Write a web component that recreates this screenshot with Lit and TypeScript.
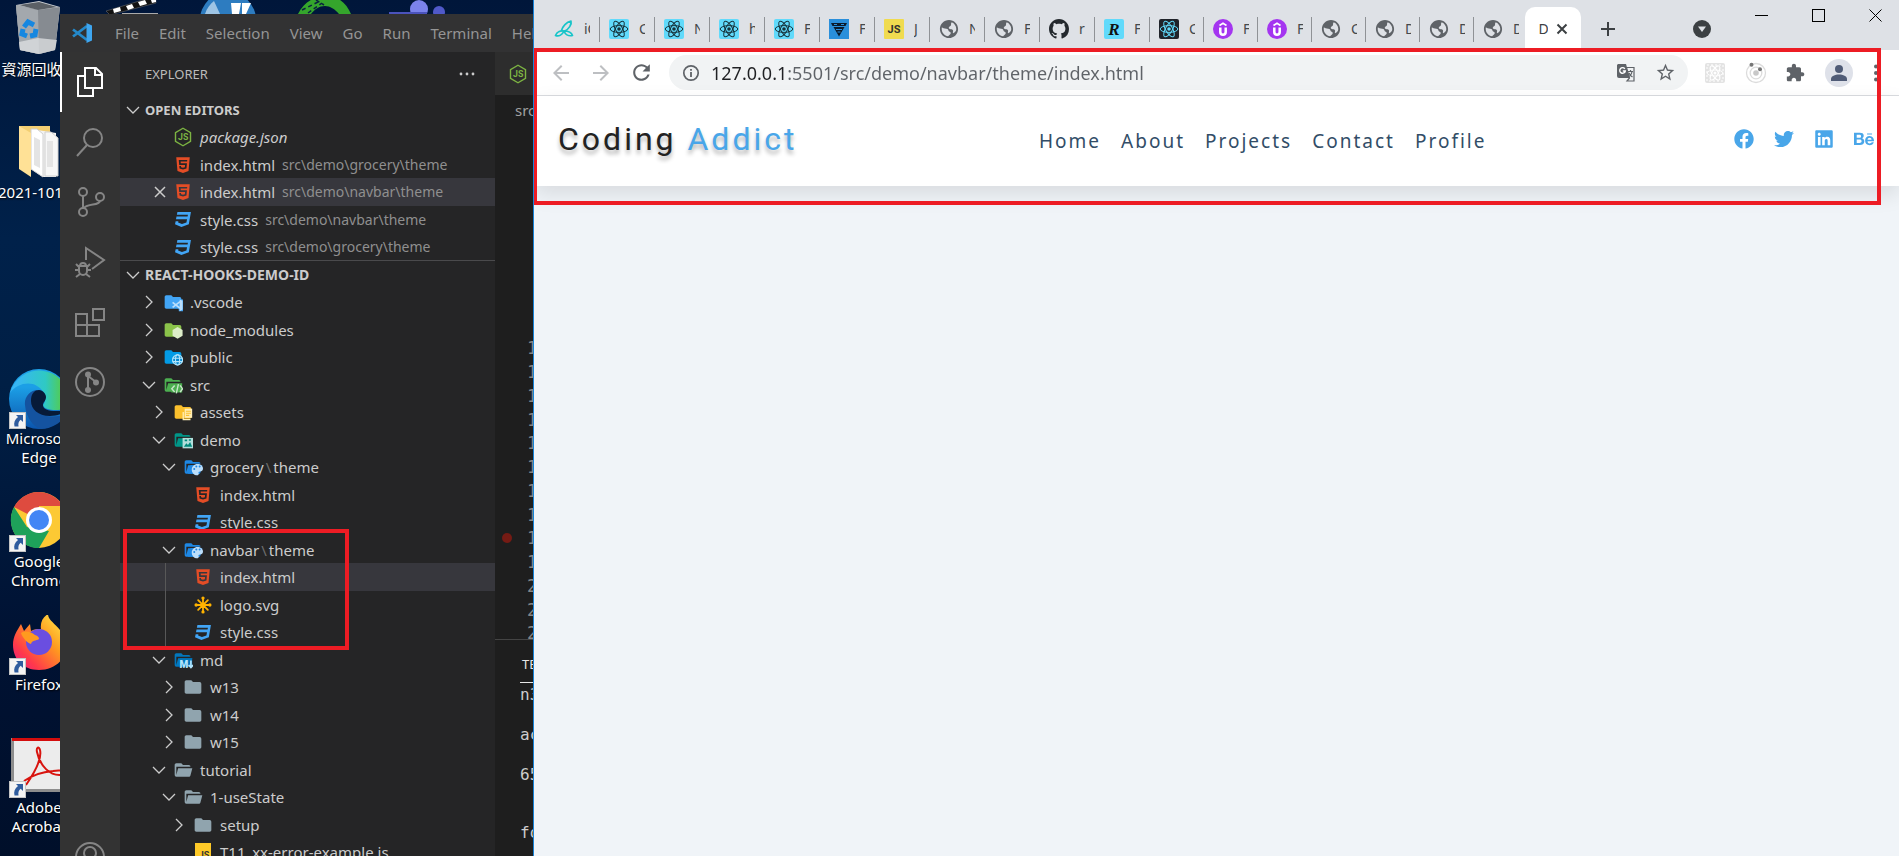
import { LitElement, html, svg, css, nothing } from "lit";
import { customElement } from "lit/decorators.js";

/* ---------- icon helpers ---------- */

const box = (size: number, view: string, body: unknown) =>
  html`<svg class="ic" width=${size} height=${size} viewBox=${view} aria-hidden="true">${body}</svg>`;

const FOLDER = "M10 4H4c-1.11 0-2 .89-2 2v12c0 1.1.9 2 2 2h16c1.1 0 2-.9 2-2V8a2 2 0 0 0-2-2h-8l-2-2z";
const FOLDER_OPEN =
  "M19 20H4a2 2 0 0 1-2-2V6c0-1.11.89-2 2-2h6l2 2h7a2 2 0 0 1 2 2H4v10l2.14-8h17.07l-2.28 8.5c-.23.87-1.01 1.5-1.93 1.5z";

const palette = svg`<path fill="#bbdefb" fill-rule="evenodd" d="M17.5 8.5c-4 0-7 3-7 6.8 0 3.700 3 6.700 6.500 6.700 1.200 0 2-.8 2-1.800 0-1-.8-1.400-.3-2.200.3-.5 1-.7 1.800-.7 2 0 3.500-1.400 3.500-3.300 0-3.200-2.900-5.500-6.500-5.500zM13.500 15.500a1.200 1.200 0 1 1 0-2.400 1.200 1.200 0 0 1 0 2.400zm2.500-3a1.200 1.200 0 1 1 0-2.400 1.200 1.200 0 0 1 0 2.400zm4 0a1.200 1.200 0 1 1 0-2.400 1.200 1.200 0 0 1 0 2.400z"/>`;

const hexJs = svg`<path d="M12 1.500 21 6.700v10.600l-9 5.200-9-5.200V6.700z" fill="none" stroke="#7cb342" stroke-width="1.700"/>
  <text x="12.200" y="16" font-size="10.500" font-weight="700" font-family="Roboto, sans-serif" text-anchor="middle" fill="#7cb342">JS</text>`;

function fileIcon(kind: string) {
  switch (kind) {
    case "node":
      return box(20, "0 0 24 24", hexJs);
    case "html":
      return box(18, "-64 0 512 512", svg`<path fill="#e44d26" d="M0 32l34.900 395.800L191.500 480l157.600-52.200L384 32H0zm308.200 127.900H124.400l4.100 49.400h175.600l-13.600 148.400-97.900 27v.3h-1.100l-98.700-27.300-6-75.800h47.700L138 320l53.500 14.500 53.700-14.500 6-62.200H84.300L71.500 112.200h241.100l-4.400 47.700z"/>`);
    case "css":
      return box(17, "0 0 512 512", svg`<path fill="#42a5f5" d="M480 32l-64 368-223.300 80L0 400l19.600-94.800h82l-8 40.600L210 390.200l134.100-44.400 18.800-97.100H29.500l16-82h333.700l10.500-52.700H56.300l16.300-82H480z"/>`);
    case "svg":
      return box(18, "0 0 24 24", svg`<g stroke="#ffb300" stroke-width="2.400" stroke-linecap="round" fill="#ffb300">
        <path d="M12 2.500v19M2.500 12h19M5.500 5.500l13 13M18.500 5.500l-13 13"/><circle cx="12" cy="2.800" r="1"/><circle cx="12" cy="21.200" r="1"/><circle cx="2.800" cy="12" r="1"/><circle cx="21.200" cy="12" r="1"/></g>`);
    case "js":
      return box(18, "0 0 18 18", svg`<rect x="1" width="16" height="18" fill="#ffca28"/><text x="10" y="15" font-size="9" font-weight="700" font-family="Roboto, sans-serif" text-anchor="middle" fill="#333">JS</text>`);
    case "f-vscode":
      return box(20, "0 0 24 24", svg`<path fill="#42a5f5" d=${FOLDER}/><path fill="#42a5f5" d="M18 8l6 1v14h-5z"/><path fill="none" stroke="#bbdefb" stroke-width="2" d="M11.500 12.500l9 7M11.500 18.500l9-7"/><path fill="#bbdefb" d="M20 9l3.500 1.500v10.500L20 23z"/>`);
    case "f-node":
      return box(20, "0 0 24 24", svg`<path fill="#8bc34a" d=${FOLDER}/><path fill="#dcedc8" d="M17.500 8.500l6 3.400v7.100l-6 3.600-6-3.600v-7.100z"/>`);
    case "f-public":
      return box(20, "0 0 24 24", svg`<path fill="#039be5" d=${FOLDER}/><g fill="#0288d1" stroke="#b3e5fc" stroke-width="1.400"><circle cx="17.500" cy="15.500" r="6"/><ellipse cx="17.500" cy="15.500" rx="2.500" ry="6"/><path d="M11.500 13.500h12M11.500 17.500h12"/></g>`);
    case "f-src":
      return box(20, "0 0 24 24", svg`<path fill="#4caf50" d=${FOLDER_OPEN}/><path fill="#4caf50" d="M10 11h13v10H10z"/><path fill="none" stroke="#c8e6c9" stroke-width="1.700" d="M14 12.500l-3.500 4 3.500 4M20.500 12.500l3 4-3 4M18.500 11l-2.500 11"/>`);
    case "f-assets":
      return box(20, "0 0 24 24", svg`<path fill="#fbc02d" d=${FOLDER}/><path fill="#ffecb3" d="M14 8h9v11h-9z"/><path fill="#fff0b8" d="M11.500 12H13v8.500h8V22h-9.500z"/><path stroke="#fbc02d" stroke-width="1.300" d="M15.500 11h6M15.500 13.500h6M15.500 16h4"/>`);
    case "f-demo":
      return box(20, "0 0 24 24", svg`<path fill="#009688" d=${FOLDER_OPEN}/><path fill="#b2dfdb" d="M11.500 9.500H24V22H11.500z"/><path fill="#00897b" d="M13 20l3-4 2 2 2.500-3.500L23 20zM14 11.500h3v2h-3zM19 11h2.500v2H19z"/>`);
    case "f-theme":
      return box(20, "0 0 24 24", svg`<path fill="#1e88e5" d=${FOLDER_OPEN}/><path fill="#1e88e5" d="M9 9.500h11V20H6z"/>${palette}`);
    case "f-md":
      return box(20, "0 0 24 24", svg`<path fill="#0277bd" d=${FOLDER_OPEN}/><path fill="#0277bd" d="M8 10h15v10H8z"/><text x="13" y="22" font-size="12" font-weight="900" font-family="Roboto, sans-serif" text-anchor="middle" fill="#b3e5fc">M</text><path fill="none" stroke="#b3e5fc" stroke-width="2" d="M21.500 12.500v8M18.800 18l2.700 3 2.700-3"/>`);
    case "f-open":
      return box(20, "0 0 24 24", svg`<path fill="#90a4ae" d=${FOLDER_OPEN}/>`);
    default:
      return box(20, "0 0 24 24", svg`<path fill="#90a4ae" d=${FOLDER}/>`);
  }
}

const chevron = (open: boolean) =>
  box(16, "0 0 16 16", svg`<path fill="none" stroke="#cccccc" stroke-width="1.300" d=${open ? "M2 5l6 6 6-6" : "M5 2l6 6-6 6"}/>`);

const reactAtom = (c: string, bg: string) => svg`<rect width="20" height="20" rx="2" fill=${bg}/>
  <g fill="none" stroke=${c} stroke-width="1"><ellipse cx="10" cy="10" rx="8.800" ry="3.400"/>
  <ellipse cx="10" cy="10" rx="8.800" ry="3.400" transform="rotate(60 10 10)"/>
  <ellipse cx="10" cy="10" rx="8.800" ry="3.400" transform="rotate(120 10 10)"/></g><circle cx="10" cy="10" r="1.800" fill=${c}/>`;

function favicon(kind: string) {
  switch (kind) {
    case "swirl":
      return box(20, "0 0 20 20", svg`<g fill="none" stroke="#17c4c9" stroke-width="1.700" stroke-linejoin="round" stroke-linecap="round"><path d="M10 12c-3-.5-7 .5-8.500 4.500 3.500 1.500 7-1 8.500-4.500z"/><path d="M7.500 11.500c1-4 5-8.500 9.500-9.500 1 3-2 8.500-7 10.500"/><path d="M10 12c1 3 4 5.500 8.500 4.500-1-3-4.500-4.500-8.500-4.500z"/></g>`);
    case "react":
      return box(20, "0 0 20 20", reactAtom("#16323a", "#61dafb"));
    case "react-dark":
      return box(20, "0 0 20 20", reactAtom("#61dafb", "#20232a"));
    case "vee":
      return box(20, "0 0 20 20", svg`<rect width="20" height="20" fill="#2a8fdb"/><path fill="#0b1a2b" d="M2 4h16l-1.500 3h-13zM4.500 8h11L10 17.500z"/><path stroke="#2a8fdb" stroke-width="1" fill="none" d="M5 5.500h3M12 5.500h3M7 10.500h6M8.500 13h3"/>`);
    case "js":
      return box(20, "0 0 20 20", svg`<rect width="20" height="20" rx="1" fill="#f0db4f"/><text x="10" y="14" font-size="11" font-weight="700" font-family="Roboto, sans-serif" text-anchor="middle" fill="#323330">JS</text>`);
    case "github":
      return box(20, "0 0 16 16", svg`<path fill="#24292e" d="M8 0C3.580 0 0 3.580 0 8c0 3.540 2.290 6.530 5.470 7.590.4.070.55-.17.55-.38 0-.19-.01-.82-.01-1.490-2.010.37-2.530-.49-2.690-.94-.09-.23-.48-.94-.82-1.130-.28-.15-.68-.52-.01-.53.63-.01 1.080.58 1.230.82.72 1.210 1.870.87 2.330.66.070-.52.28-.87.51-1.070-1.780-.2-3.640-.89-3.640-3.950 0-.87.31-1.590.82-2.150-.08-.2-.36-1.020.08-2.120 0 0 .67-.21 2.200.82.64-.18 1.320-.27 2-.27.68 0 1.360.09 2 .27 1.530-1.040 2.200-.82 2.200-.82.44 1.100.16 1.920.08 2.120.51.56.82 1.270.82 2.150 0 3.070-1.870 3.750-3.650 3.950.29.25.54.73.54 1.480 0 1.070-.01 1.930-.01 2.200 0 .21.15.46.55.38A8.013 8.013 0 0016 8c0-4.420-3.580-8-8-8z"/>`);
    case "r":
      return box(20, "0 0 20 20", svg`<rect width="20" height="20" rx="2" fill="#61dafb"/><text x="10" y="16" font-size="17" font-weight="700" font-style="italic" font-family="'Liberation Serif', serif" text-anchor="middle" fill="#111">R</text>`);
    case "udemy":
      return box(20, "0 0 20 20", svg`<circle cx="10" cy="10" r="10" fill="#a435f0"/><path fill="none" stroke="#fff" stroke-width="2.500" d="M7.300 8.500v4.500a2.700 2.700 0 0 0 5.400 0V8.500"/><path fill="none" stroke="#fff" stroke-width="1.700" d="M6.500 6.500 10 4.300l3.500 2.200"/>`);
    default:
      return box(20, "1 1 22 22", svg`<path fill="#5f6368" d="M12 2C6.480 2 2 6.480 2 12s4.480 10 10 10 10-4.480 10-10S17.520 2 12 2zm-1 17.930c-3.950-.49-7-3.850-7-7.930 0-.62.08-1.210.21-1.790 1.500 1.200 2.500 1.400 4.800 1.400 2 .1 2.300 1.500 2.500 2.400.3 1.400 2.500 1 2.400 2.600-.1 1.100-1.900 2.100-2.910 3.320zm5.500-3.200c-.9-1.300.9-2.800-.6-3.900-1-.8-3-.1-3.900-1.300-1-1.400.8-2.400 1.800-3.100 1.100-.8-.3-2.300 1.200-3.830 2.930 1.190 5 4.060 5 7.410 0 2.080-1.300 4.020-3.500 4.720z"/>`);
  }
}

/* ---------- data ---------- */

interface Node { level: number; icon: string; name: string; sub?: string; open?: boolean; selected?: boolean; guide?: boolean }

const TREE: Node[] = [
  { level: 0, icon: "f-vscode", name: ".vscode", open: false },
  { level: 0, icon: "f-node", name: "node_modules", open: false },
  { level: 0, icon: "f-public", name: "public", open: false },
  { level: 0, icon: "f-src", name: "src", open: true },
  { level: 1, icon: "f-assets", name: "assets", open: false },
  { level: 1, icon: "f-demo", name: "demo", open: true },
  { level: 2, icon: "f-theme", name: "grocery", sub: "theme", open: true },
  { level: 3, icon: "html", name: "index.html" },
  { level: 3, icon: "css", name: "style.css" },
  { level: 2, icon: "f-theme", name: "navbar", sub: "theme", open: true },
  { level: 3, icon: "html", name: "index.html", selected: true, guide: true },
  { level: 3, icon: "svg", name: "logo.svg", guide: true },
  { level: 3, icon: "css", name: "style.css", guide: true },
  { level: 1, icon: "f-md", name: "md", open: true },
  { level: 2, icon: "f", name: "w13", open: false },
  { level: 2, icon: "f", name: "w14", open: false },
  { level: 2, icon: "f", name: "w15", open: false },
  { level: 1, icon: "f-open", name: "tutorial", open: true },
  { level: 2, icon: "f-open", name: "1-useState", open: true },
  { level: 3, icon: "f", name: "setup", open: false },
  { level: 3, icon: "js", name: "T11_xx-error-example.js" },
];

const EDITORS = [
  { icon: "node", name: "package.json", path: "", preview: true },
  { icon: "html", name: "index.html", path: "src\\demo\\grocery\\theme" },
  { icon: "html", name: "index.html", path: "src\\demo\\navbar\\theme", selected: true },
  { icon: "css", name: "style.css", path: "src\\demo\\navbar\\theme" },
  { icon: "css", name: "style.css", path: "src\\demo\\grocery\\theme" },
];

const TABS: [string, string][] = [
  ["swirl", "iC"], ["react", "C"], ["react", "N"], ["react", "h"], ["react", "F"], ["vee", "F"], ["js", "J"],
  ["globe", "N"], ["globe", "F"], ["github", "r"], ["r", "F"], ["react-dark", "C"], ["udemy", "F"], ["udemy", "F"],
  ["globe", "C"], ["globe", "D"], ["globe", "D"], ["globe", "D"],
];

const LINKS = ["Home", "About", "Projects", "Contact", "Profile"];

const SOCIAL: [string, string, string][] = [
  ["Facebook", "0 0 512 512", "M504 256C504 119 393 8 256 8S8 119 8 256c0 123.780 90.690 226.380 209.250 245V327.690h-63V256h63v-54.640c0-62.150 37-96.480 93.670-96.480 27.140 0 55.520 4.840 55.520 4.840v61h-31.280c-30.800 0-40.410 19.120-40.410 38.730V256h68.780l-11 71.690h-57.780V501C413.310 482.380 504 379.780 504 256z"],
  ["Twitter", "0 0 512 512", "M459.370 151.716c.325 4.548.325 9.097.325 13.645 0 138.720-105.583 298.558-298.558 298.558-59.452 0-114.680-17.219-161.137-47.106 8.447.974 16.568 1.299 25.340 1.299 49.055 0 94.213-16.568 130.274-44.832-46.132-.975-84.792-31.188-98.112-72.772 6.498.974 12.995 1.624 19.818 1.624 9.421 0 18.843-1.300 27.614-3.573-48.081-9.747-84.143-51.980-84.143-102.985v-1.299c13.969 7.797 30.214 12.670 47.431 13.319-28.264-18.843-46.781-51.005-46.781-87.391 0-19.492 5.197-37.360 14.294-52.954 51.655 63.675 129.300 105.258 216.365 109.807-1.624-7.797-2.599-15.918-2.599-24.040 0-57.828 46.782-104.934 104.934-104.934 30.213 0 57.502 12.670 76.670 33.137 23.715-4.548 46.456-13.320 66.599-25.340-7.798 24.366-24.366 44.833-46.132 57.827 21.117-2.273 41.584-8.122 60.426-16.243-14.292 20.791-32.161 39.308-52.628 54.253z"],
  ["LinkedIn", "-32 0 512 512", "M416 32H31.900C14.300 32 0 46.500 0 64.300v383.400C0 465.500 14.300 480 31.900 480H416c17.600 0 32-14.500 32-32.300V64.300c0-17.800-14.400-32.300-32-32.300zM135.400 416H69V202.200h66.500V416zm-33.200-243c-21.300 0-38.500-17.300-38.500-38.500S80.900 96 102.200 96c21.200 0 38.500 17.300 38.500 38.500 0 21.300-17.200 38.500-38.500 38.500zm282.100 243h-66.400V312c0-24.800-.5-56.700-34.500-56.700-34.600 0-39.900 27-39.900 54.900V416h-66.400V202.200h63.700v29.200h.9c8.900-16.800 30.600-34.500 62.900-34.500 67.200 0 79.700 44.300 79.700 101.900V416z"],
  ["Behance", "0 -32 576 576", "M232 237.200c31.800-15.200 48.400-38.200 48.400-74 0-70.600-52.600-87.800-113.300-87.800H0v354.400h171.800c64.400 0 124.900-30.900 124.900-102.900 0-44.500-21.100-77.400-64.700-89.700zM77.900 135.900H151c28.100 0 53.400 7.900 53.400 40.500 0 30.100-19.700 42.200-47.500 42.200h-79v-82.700zm83.300 233.700H77.900V272h84.900c34.300 0 56 14.300 56 50.600 0 35.800-25.900 47-57.600 47zm358.500-240.700H376V94h143.700v34.900zM576 305.200c0-75.900-44.400-139.200-124.900-139.200-78.200 0-131.300 58.800-131.300 135.800 0 79.900 50.300 134.700 131.300 134.700 61.300 0 101-27.600 120.100-86.300H509c-6.700 21.900-34.300 33.500-55.700 33.500-41.300 0-63-24.200-63-65.300h185.100c.3-4.200.6-8.700.6-13.200zM390.400 274c2.300-33.700 24.700-54.800 58.500-54.800 35.400 0 53.200 20.800 56.200 54.800H390.400z"],
];

/* ---------- desktop ---------- */

const shortcut = svg`<rect x="0.500" y="43.500" width="16" height="16" fill="#f4f4f4" stroke="#c4c4c4"/>
  <path fill="#2f5c9e" d="M7 46h7v7l-2.300-2.300c-2 1.500-2.700 3.500-2.200 6.800H5.500c-1-4 .3-7 3.500-9.500z"/>`;

const desktopIcon = (kind: string) => {
  const art: Record<string, unknown> = {
    bin: svg`<path fill="#c9ced3" d="M7 5 30 1l21 6-5 43-16 4-19-4z"/><path fill="#868b91" d="M7 5l22 5 22-3-5 43-16 4-19-4z"/><path fill="#a3a8ad" d="M7 5l22 5 1 44-19-4z"/><path fill="#5b6066" d="M10 5l20-3 18 5-19 3z"/><path fill="#dfe2e4" d="M10 42l19-4 19 2-2 10-16 4-19-4z" opacity=".75"/><g fill="none" stroke="#1687e0" stroke-width="5"><path d="M15 27l4-5 6 3"/><path d="M27 29l-1 6-5 1"/><path d="M18 36l-5-2 1-5"/></g>`,
    folder: svg`<path fill="#f3cf73" d="M10 3h31v40H10z"/><path fill="#f2f2f2" d="M22 6l25 4v44H34L22 46z"/><path fill="#fff" stroke="#d0d0d0" d="M22 6h6l6 5v43l-12-8z"/><path fill="#f7f7f7" stroke="#d0d0d0" d="M36 9h6l7 6v38H36z"/><path fill="#e4e4e4" d="M25 14l6 3v28l-6-3zM38 18h6v26h-6z"/><path fill="#ffe196" d="M10 3l12 7v44L10 46z"/>`,
    edge: svg`<defs><linearGradient id="eb" x1="0" y1="0" x2="0" y2="1"><stop offset=".3" stop-color="#1c9fe6"/><stop offset="1" stop-color="#0b55ad"/></linearGradient><linearGradient id="et" x1="0" y1="0" x2="1" y2="0"><stop offset=".1" stop-color="#38b6f5"/><stop offset=".6" stop-color="#2fc9c4"/><stop offset=".9" stop-color="#55cc4a"/></linearGradient></defs>
      <circle cx="30" cy="30" r="30" fill="url(#eb)"/>
      <path fill="url(#et)" d="M1 24A30 30 0 0 1 60 30c0 8-6 11-13 11-7 0-13-2-13-5 4-5 3-14-6-19C20 12 7 15 1 24z"/>
      <path fill="#1453a0" d="M16 36c-1-8 5-15 13-15-8 5-8 20 6 25 8 3 18 1 23-2-5 10-16 16-26 16-8-2-15-12-16-24z"/>
      <path fill="#071a38" d="M30 21c4 0 7 4 7 7 0 4-3 5-3 8 0 4 5 6 13 6 5 0 9-1 12-3-2 5-10 8-18 8-12 0-19-7-19-15 0-7 3-11 8-11z"/>`,
    chrome: svg`<circle cx="30" cy="28" r="28" fill="#fcc934"/><path fill="#de4b3f" d="M30 28 5 15A28 28 0 0 1 54 14H30z"/><path fill="#1ea15a" d="M5 15l13 20 22 4-10 17A28 28 0 0 1 5 15z"/><circle cx="30" cy="28" r="13" fill="#fff"/><circle cx="30" cy="28" r="10" fill="#4386f5"/>`,
    firefox: svg`<defs><linearGradient id="fx" x1="1" y1="0" x2="0" y2="1"><stop offset="0" stop-color="#fff44f"/><stop offset=".4" stop-color="#ff9a1f"/><stop offset=".75" stop-color="#ff3a4a"/><stop offset="1" stop-color="#e5148c"/></linearGradient></defs><path fill="url(#fx)" d="M12 9l3 7 6-7 1 7c4-2 6-2 10-2-1-7 2-12 7-15 0 8 13 12 17 25 5 18-9 31-26 31C14 55 4 44 4 30c0-9 4-14 8-21z"/><circle cx="30" cy="27" r="13" fill="#6a4ee0"/><path fill="#ff9a1f" d="M12 18c5-3 10-1 14 2 3 1 4 2 4 4-3 2-7 1-8 5-3-1-8-5-10-11z"/>`,
    adobe: svg`<path fill="#8d8d8d" d="M2 0h56v54H2z"/><path fill="#ececec" d="M5 3h56v48H5z"/><path fill="#d30d0d" d="M3 0h58v3H3z"/><path fill="none" stroke="#d8140f" stroke-width="2" d="M17 47C26 34 33 20 31 12c-1-4-4-3-3 2 3 14 13 24 24 23 6-1 4-6-8-4-12 1-22 5-29 10"/>`,
  };
  const linked = kind !== "bin" && kind !== "folder";
  return html`<svg class="dico" width="60" height="60" viewBox="0 0 60 60" aria-hidden="true">${art[kind]}${linked ? shortcut : nothing}</svg>`;
};

const DESKTOP: [string, string][] = [
  ["bin", "資源回收筒"], ["folder", "2021-10123"], ["", ""], ["edge", "Microsoft Edge"],
  ["chrome", "Google Chrome"], ["firefox", "Firefox"], ["adobe", "Adobe Acrobat"],
];

@customElement("desktop-icons")
class DesktopIcons extends LitElement {
  static styles = css`
    :host { display: grid; grid-auto-rows: 123px; overflow: hidden; align-content: start; }
    .tile { width: 78px; display: flex; flex-direction: column; align-items: center; }
    .dico { display: block; flex: none; }
    .label { color: #fff; font: 15px/19px "Noto Sans", "Noto Sans CJK TC", sans-serif; text-align: center; text-shadow: 1px 1px 2px #000; white-space: nowrap; }
    .word { display: block; }
  `;
  render() {
    return DESKTOP.map(([kind, label]) => html`<div class="tile">
      ${kind ? desktopIcon(kind) : nothing}
      <div class="label">${label.split(" ").map((w) => html`<span class="word">${w}</span>`)}</div>
    </div>`);
  }
}

/* ---------- code editor window ---------- */

@customElement("code-window")
class CodeWindow extends LitElement {
  static styles = css`
    :host { display: grid; grid-template-rows: 38px minmax(0, 1fr); overflow: hidden; background: #1e1e1e; color: #cccccc; font: 15px/20px "Noto Sans", sans-serif; position: relative; }
    button { border: 0; padding: 0; margin: 0; background: none; color: inherit; font: inherit; display: flex; align-items: center; white-space: nowrap; }
    .ic { display: block; flex: none; }
    .menu { display: flex; align-items: center; gap: 20px; background: #323233; color: #959595; padding-left: 12px; overflow: hidden; }
    .brand { margin-right: 3px; display: flex; }
    .main { display: grid; grid-template-columns: 60px 375px minmax(0, 1fr); min-height: 0; }
    .activity { background: #333333; display: flex; flex-direction: column; overflow: hidden; }
    .act { width: 60px; height: 60px; justify-content: center; flex: none; color: #858585; }
    .act.on { color: #fff; box-shadow: inset 2px 0 0 #fff; }
    .account { margin-top: auto; margin-bottom: -31px; }
    .side { background: #252526; overflow: hidden; display: flex; flex-direction: column; }
    .title { height: 44px; flex: none; display: flex; align-items: center; justify-content: space-between; padding: 0 18px 0 25px; font-size: 13px; color: #bbbbbb; }
    .head { height: 27px; flex: none; font-size: 13px; font-weight: 700; padding-left: 5px; gap: 4px; color: #cccccc; width: 100%; }
    .head.folders { font-size: 14px; height: 28px; border-top: 1px solid #4a4a4c; margin-top: -1px; }
    .list { list-style: none; margin: 0; padding: 0; flex: none; }
    .list li { display: flex; height: 28px; position: relative; }
    .list li:nth-child(even) { height: 27px; }
    .list li.sel { background: #37373d; }
    .edit { width: 100%; padding-left: 53px; gap: 7px; position: relative; }
    .x { position: absolute; left: 33px; }
    .slot { width: 20px; display: flex; justify-content: center; flex: none; }
    .path { color: #8f8f8f; font-size: 14px; }
    .preview { font-style: italic; }
    .node { width: 100%; }
    .twist { width: 16px; flex: none; margin-right: 6px; }
    .node .slot { margin-right: 7px; }
    .sep { color: #6d6d6d; padding: 0 2px; }
    .guide::before { content: ""; position: absolute; left: 45px; top: 0; bottom: 0; width: 1px; background: #585858; }
    .editor { display: grid; grid-template-rows: 43px 30px minmax(0, 1fr) 217px; min-width: 0; overflow: hidden; }
    .etab { background: #2d2d2d; display: flex; align-items: center; padding-left: 13px; }
    .crumb { padding-left: 20px; color: #a0a0a0; display: flex; align-items: center; }
    .code { overflow: hidden; position: relative; display: flex; flex-direction: column; justify-content: flex-end; }
    .lines { list-style: none; margin: 0 0 -6px; padding: 0 0 0 32px; color: #858585; font: 17px/24px "DejaVu Sans Mono", monospace; }
    .lines li { height: 24px; position: relative; }
    .lines li:nth-child(4n) { height: 23px; }
    .lines li.bp::before { content: ""; position: absolute; left: -25px; top: 7px; width: 10px; height: 10px; border-radius: 50%; background: #751b14; }
    .panel { border-top: 1px solid #444; padding-left: 25px; overflow: hidden; }
    .ptab { height: 25px; font-size: 13px; color: #e7e7e7; border-bottom: 1px solid #e7e7e7; margin-top: 17px; padding-left: 2px; line-height: 14px; }
    .term { font: 16px/20px "DejaVu Sans Mono", monospace; margin: 2px 0 0; color: #cccccc; }
    .term p { margin: 0 0 20px; height: 20px; }
    .term p:nth-child(3) { margin-bottom: 38px; }
    .mark { position: absolute; left: 63px; top: 515px; width: 218px; height: 113px; border: 4px solid #ed1c24; pointer-events: none; }
  `;

  private activity() {
    const s = (body: unknown) => box(32, "0 0 32 32", svg`<g fill="none" stroke="currentColor" stroke-width="2">${body}</g>`);
    return [
      s(svg`<path d="M11 2h11l6 6v14H11zM21 2v7h7"/><path d="M11 10H4v20h15v-8"/>`),
      s(svg`<circle cx="19" cy="12" r="9"/><path d="M13 19 3 30"/>`),
      s(svg`<circle cx="9" cy="6" r="4"/><circle cx="9" cy="26" r="4"/><circle cx="26" cy="11" r="4"/><path d="M9 10v12M26 15c-1 5-12 2-16 7"/>`),
      s(svg`<path d="M12 14V2l18 12-12 9"/><path d="M5 20h8v5a4 4 0 0 1-8 0zM6 20a3 3 0 0 1 6 0M2 18l3 3M16 18l-3 3M1 24h4M13 24h4M2 31l4-3M16 31l-4-3"/>`),
      s(svg`<path d="M2 8h11v22H2zM2 19h23v11H2M13 19v11M19 3h11v11H19z"/>`),
      box(32, "0 0 32 32", svg`<g fill="none" stroke="currentColor" stroke-width="2"><circle cx="16" cy="16" r="14"/><path d="M14 9v15M14 10l8 6"/></g><g fill="currentColor"><circle cx="14" cy="8.500" r="3"/><circle cx="14" cy="24" r="3"/><circle cx="22" cy="16.500" r="3"/></g>`),
    ];
  }

  render() {
    const names = ["Explorer", "Search", "Source Control", "Run and Debug", "Extensions", "GitLens"];
    return html`
      <nav class="menu" aria-label="Menu">
        <span class="brand">${box(20, "0 0 20 20", svg`<path fill="none" stroke="#2489ca" stroke-width="2.800" d="M1 6.500 15 17M1 13.500 15 3"/><path fill="#3ea6f0" d="M14.500 0 20 2.500v15L14.500 20z"/>`)}</span>
        ${["File", "Edit", "Selection", "View", "Go", "Run", "Terminal", "Help"].map((m) => html`<button>${m}</button>`)}
      </nav>
      <div class="main">
        <div class="activity">
          ${this.activity().map((i, n) => html`<button class="act ${n === 0 ? "on" : ""}" aria-label=${names[n]}>${i}</button>`)}
          <button class="act account" aria-label="Accounts">${box(32, "0 0 32 32", svg`<g fill="none" stroke="currentColor" stroke-width="2"><circle cx="16" cy="16" r="14"/><circle cx="16" cy="12" r="6"/><path d="M6 26c1-5 5-8 10-8s9 3 10 8"/></g>`)}</button>
        </div>
        <section class="side">
          <div class="title"><span>EXPLORER</span><button aria-label="More">${box(20, "0 0 20 20", svg`<g fill="#ccc"><circle cx="4" cy="10" r="1.400"/><circle cx="10" cy="10" r="1.400"/><circle cx="16" cy="10" r="1.400"/></g>`)}</button></div>
          <button class="head">${chevron(true)}OPEN EDITORS</button>
          <ul class="list">
            ${EDITORS.map((e) => html`<li class=${e.selected ? "sel" : ""}><button class="edit">
              ${e.selected ? html`<span class="x">${box(14, "0 0 14 14", svg`<path stroke="#ccc" stroke-width="1.500" d="M2 2l10 10M12 2 2 12"/>`)}</span>` : nothing}
              <span class="slot">${fileIcon(e.icon)}</span><span class=${e.preview ? "preview" : ""}>${e.name}</span>
              ${e.path ? html`<span class="path">${e.path}</span>` : nothing}</button></li>`)}
          </ul>
          <button class="head folders">${chevron(true)}REACT-HOOKS-DEMO-ID</button>
          <ul class="list">
            ${TREE.map((n) => html`<li class="${n.selected ? "sel" : ""} ${n.guide ? "guide" : ""}">
              <button class="node" style="padding-left:${21 + n.level * 10}px">
                <span class="twist">${n.open === undefined ? nothing : chevron(n.open)}</span>
                <span class="slot">${fileIcon(n.icon)}</span>${n.name}${n.sub ? html`<span class="sep">\\</span>${n.sub}` : nothing}
              </button></li>`)}
          </ul>
        </section>
        <section class="editor">
          <div class="etab">${box(20, "0 0 24 24", hexJs)}</div>
          <div class="crumb">src</div>
          <div class="code"><ol class="lines">
            ${Array.from({ length: 13 }, (_, i) => html`<li class=${i === 8 ? "bp" : ""}>${i + 10}</li>`)}
          </ol></div>
          <div class="panel">
            <div class="ptab">TERMINAL</div>
            <div class="term">${["n3", "ac", "65", "fo"].map((t) => html`<p>${t}</p>`)}</div>
          </div>
        </section>
      </div>
      <div class="mark"></div>`;
  }
}

/* ---------- browser window ---------- */

@customElement("browser-window")
class BrowserWindow extends LitElement {
  static styles = css`
    :host { display: flex; flex-direction: column; position: relative; background: #f0f4f8; border-left: 1px solid #1883d7; font: 15px/20px "Noto Sans", sans-serif; min-width: 0; overflow: hidden; }
    button { border: 0; padding: 0; margin: 0; background: none; color: inherit; font: inherit; display: flex; align-items: center; justify-content: center; flex: none; }
    .ic { display: block; flex: none; }
    .strip { box-sizing: border-box; height: 50px; flex: none; background: #dee1e6; display: flex; padding: 7px 0 0 11px; }
    .tab { width: 54px; height: 43px; gap: 10px; justify-content: flex-start; padding-left: 9px; position: relative; color: #45494d; }
    .tab:nth-child(-n + 11) { width: 55px; }
    .tab::after { content: ""; position: absolute; right: 0; top: 10px; width: 1px; height: 25px; background: #8f9296; }
    .tab:nth-child(18)::after { content: none; }
    .tab:nth-child(18) { width: 51px; }
    .txt { width: 6px; overflow: hidden; text-align: left; white-space: nowrap; font-size: 14px; }
    .active { width: 56px; height: 43px; background: #fff; border-radius: 10px 10px 0 0; gap: 8px; color: #3c4043; }
    .active .txt { width: 9px; }
    .plus { width: 54px; height: 43px; }
    .caps { margin-left: auto; display: flex; gap: 44px; padding-right: 17px; }
    .drop { width: 18px; height: 43px; }
    .win { width: 13px; height: 17px; }
    .bar { box-sizing: border-box; height: 46px; flex: none; background: #fff; border-bottom: 1px solid #dadce0; display: flex; align-items: center; padding: 0 9px 0 16px; }
    .nav { width: 22px; height: 22px; margin-right: 18px; }
    .omni { flex: 1; height: 35px; border-radius: 18px; background: #f1f3f4; display: flex; align-items: center; padding: 0 12px; min-width: 0; margin: 0 16px 0 -1px; gap: 10px; }
    .url { flex: 1; min-width: 0; border: 0; outline: 0; padding: 0; margin: 0; height: 30px; font: 18px/30px "Noto Sans", sans-serif; color: transparent; background: linear-gradient(90deg, #202124 77px, #5f6368 77px); background-clip: text; -webkit-background-clip: text; }
    .star { margin-left: 9px; }
    .tools { display: flex; align-items: center; gap: 19px; }
    .avatar { width: 28px; height: 28px; border-radius: 50%; background: #dee1e9; }
    .navbar { height: 90px; flex: none; background: #fff; display: flex; align-items: center; justify-content: space-between; padding: 0 25px 0 24px; box-shadow: 0 8px 20px rgba(0, 0, 0, 0.1); }
    .logo { font: 32px/40px Roboto, sans-serif; letter-spacing: 3px; color: #222; text-decoration: none; text-shadow: 0 4px 4px rgba(0, 0, 0, 0.3); margin-bottom: 4px; white-space: nowrap; }
    .blue { color: #49a6e9; }
    .links { display: flex; gap: 20px; list-style: none; margin: 0 6px 0 0; padding: 0; }
    .link { color: #324d67; text-decoration: none; font-size: 19px; line-height: 26px; letter-spacing: 2px; }
    .social { display: flex; gap: 20px; margin-bottom: 4px; }
    .social a { color: #49a6e9; display: block; }
    .mark { position: absolute; left: -1px; right: 18px; top: 48px; height: 149px; border: 4px solid #ed1c24; pointer-events: none; }
  `;

  render() {
    const g = "#5f6368";
    return html`
      <div class="strip">
        ${TABS.map(([k, t]) => html`<button class="tab">${favicon(k)}<span class="txt">${t}</span></button>`)}
        <button class="active"><span class="txt">D</span>${box(12, "0 0 12 12", svg`<path stroke="#3c4043" stroke-width="2" d="M1.500 1.500l9 9M10.500 1.500l-9 9"/>`)}</button>
        <button class="plus" aria-label="New tab">${box(16, "0 0 16 16", svg`<path stroke="#3c4043" stroke-width="2" d="M8 1v14M1 8h14"/>`)}</button>
        <div class="caps">
          <button class="drop" aria-label="Search tabs">${box(18, "0 0 18 18", svg`<circle cx="9" cy="9" r="9" fill="#3c4043"/><path fill="#dee1e6" d="M5 6.500h8L9 12z"/>`)}</button>
          <button class="win" aria-label="Minimize">${box(13, "0 0 13 13", svg`<path stroke="#000" d="M0 6.500h13"/>`)}</button>
          <button class="win" aria-label="Maximize">${box(13, "0 0 13 13", svg`<rect x=".5" y=".5" width="12" height="12" fill="none" stroke="#000"/>`)}</button>
          <button class="win" aria-label="Close">${box(13, "0 0 13 13", svg`<path stroke="#000" d="M.5.5l12 12M12.500.5l-12 12"/>`)}</button>
        </div>
      </div>
      <div class="bar">
        <button class="nav" aria-label="Back">${box(24, "0 0 24 24", svg`<path fill="#bdbfc2" d="M20 11H7.830l5.590-5.590L12 4l-8 8 8 8 1.410-1.410L7.830 13H20v-2z"/>`)}</button>
        <button class="nav" aria-label="Forward">${box(24, "0 0 24 24", svg`<path fill="#bdbfc2" transform="translate(24 0) scale(-1 1)" d="M20 11H7.830l5.590-5.590L12 4l-8 8 8 8 1.410-1.410L7.830 13H20v-2z"/>`)}</button>
        <button class="nav" aria-label="Reload">${box(25, "0 0 24 24", svg`<path fill=${g} d="M17.650 6.350C16.200 4.900 14.210 4 12 4c-4.420 0-7.990 3.580-7.990 8s3.570 8 7.990 8c3.730 0 6.840-2.550 7.730-6h-2.080c-.82 2.330-3.040 4-5.650 4-3.310 0-6-2.690-6-6s2.690-6 6-6c1.660 0 3.140.69 4.220 1.780L13 11h7V4l-2.350 2.350z"/>`)}</button>
        <div class="omni">
          ${box(20, "0 0 20 20", svg`<circle cx="10" cy="10" r="7.200" fill="none" stroke=${g} stroke-width="1.700"/><path stroke=${g} stroke-width="1.800" d="M10 9v5M10 6v1.800"/>`)}
          <input class="url" type="text" aria-label="Address" .value=${"127.0.0.1:5501/src/demo/navbar/theme/index.html"} />
          <button aria-label="Translate">${box(20, "0 0 20 20", svg`<path fill=${g} d="M2 1h8l4 14H3a2 2 0 0 1-2-2V2z"/><path fill="#f1f3f4" stroke=${g} stroke-width="1.200" d="M10.500 4.500H18V18h-7l2.500-3z"/><path fill="none" stroke="#fff" stroke-width="1.400" d="M8.800 5.800a2.800 2.800 0 1 0 .5 2.200H6.800"/><path fill="none" stroke=${g} stroke-width="1.200" d="M12 8.500h5M14.500 7v1.500M16 8.500c-.5 3-2 4.500-3.500 5M13 10c.8 2 2 3 3.500 4"/>`)}</button>
          <button class="star" aria-label="Bookmark">${box(21, "0 0 24 24", svg`<path fill=${g} d="M22 9.240l-7.190-.62L12 2 9.190 8.630 2 9.240l5.460 4.730L5.820 21 12 17.270 18.180 21l-1.630-7.030L22 9.240zM12 15.400l-3.760 2.270 1-4.280-3.320-2.880 4.380-.38L12 6.100l1.710 4.040 4.380.38-3.320 2.880 1 4.280L12 15.400z"/>`)}</button>
        </div>
        <div class="tools">
          <button aria-label="React tools">${box(22, "0 0 22 22", svg`<rect x="1" y="1" width="20" height="20" rx="2" fill="#e3e3e3"/><g fill="none" stroke="#fff"><ellipse cx="11" cy="11" rx="8" ry="3"/><ellipse cx="11" cy="11" rx="8" ry="3" transform="rotate(60 11 11)"/><ellipse cx="11" cy="11" rx="8" ry="3" transform="rotate(120 11 11)"/><path stroke-dasharray="2 2" d="M3 3h16v16H3z"/></g><circle cx="11" cy="11" r="1.500" fill="#fff"/>`)}</button>
          <button aria-label="Orbit">${box(22, "0 0 22 22", svg`<g fill="none" stroke="#dcdcdc"><circle cx="11" cy="11" r="9.500" stroke-width="1.300"/><circle cx="11" cy="11" r="5.800" stroke-width="1.300"/></g><circle cx="11" cy="11" r="2.800" fill="#c8c8c8"/><g fill="#777"><circle cx="6.500" cy="2.800" r="2"/><circle cx="15" cy="7.200" r="2"/></g>`)}</button>
          <button aria-label="Extensions">${box(20, "1 0 24 24", svg`<path fill=${g} d="M20.500 11H19V7c0-1.100-.9-2-2-2h-4V3.500C13 2.120 11.880 1 10.500 1S8 2.120 8 3.500V5H4c-1.100 0-1.990.9-1.990 2v3.800H3.500c1.490 0 2.700 1.210 2.700 2.700s-1.210 2.700-2.700 2.700H2V20c0 1.100.9 2 2 2h3.800v-1.500c0-1.490 1.210-2.700 2.700-2.700 1.490 0 2.700 1.210 2.700 2.700V22H17c1.100 0 2-.9 2-2v-4h1.500c1.380 0 2.500-1.120 2.500-2.500S21.880 11 20.500 11z"/>`)}</button>
          <button class="avatar" aria-label="Profile">${box(18, "0 0 18 18", svg`<g fill="#4f5b76"><circle cx="9" cy="5" r="4"/><path d="M1 17v-2c0-3 4-4.500 8-4.500s8 1.500 8 4.500v2z"/></g>`)}</button>
          <button aria-label="Menu">${box(18, "0 0 18 18", svg`<g fill=${g}><circle cx="4" cy="2.500" r="2"/><circle cx="4" cy="9" r="2"/><circle cx="4" cy="15.500" r="2"/></g>`)}</button>
        </div>
      </div>
      <nav class="navbar">
        <a class="logo" href="#">Coding <span class="blue">Addict</span></a>
        <ul class="links">${LINKS.map((l) => html`<li><a class="link" href="#">${l}</a></li>`)}</ul>
        <div class="social">${SOCIAL.map(([n, v, d]) => html`<a href="#" aria-label=${n}>${box(20, v, svg`<path fill="currentColor" d=${d}/>`)}</a>`)}</div>
      </nav>
      <div class="mark"></div>`;
  }
}

/* ---------- screen ---------- */

@customElement("app-root")
class AppRoot extends LitElement {
  static styles = css`
    :host { display: grid; grid-template-columns: 60px 473px minmax(0, 1fr); grid-template-rows: minmax(0, 1fr); height: 100vh; overflow: hidden; background: linear-gradient(180deg, #00163a 0, #00214a 28%, #001f45 45%, #001233 75%, #000f2a 100%); }
    .middle { display: grid; grid-template-rows: 14px minmax(0, 1fr); min-width: 0; overflow: hidden; }
    .peek { display: block; }
  `;
  render() {
    return html`
      <desktop-icons></desktop-icons>
      <div class="middle">
        <svg class="peek" width="473" height="14" viewBox="60 0 473 14" aria-hidden="true">
          <path fill="#111" stroke="#777" stroke-width=".5" d="M106 11 146-1h10v4l-46 12z"/>
          <path fill="#fff" d="M113 9l7-2 1 4-7 2zM126 6l6-2 2 4-6 2zM138 2l7-2 2 4-7 2zM151 0h5v2l-4 1z"/>
          <path stroke="#aaa" d="M122 13.500h36"/>
          <circle cx="228" cy="20" r="28" fill="#2d7cc0"/><path fill="#cfe4f5" d="M205 14c2-6 5-10 9-13l6 13z" opacity=".7"/><path fill="#fff" d="M231 3h10l-2 11h-7zM242 3h9l-5 11h-4z"/>
          <path fill="#35a52c" d="M298 14c6-12 16-18 30-18 10 0 19 8 23 18h-12c-4-5-9-8-14-8-6 0-10 3-14 8z"/><path stroke="#0a2140" stroke-width="1.500" stroke-dasharray="4 3" d="M302 10l16-8M308 13l14-10M316 0l8 5" fill="none"/>
          <circle cx="419" cy="9" r="9" fill="#7b83eb"/><circle cx="439" cy="12" r="6" fill="#5059c9"/><rect x="389" y="12" width="38" height="6" fill="#4b53bc"/>
        </svg>
        <code-window></code-window>
      </div>
      <browser-window></browser-window>`;
  }
}
